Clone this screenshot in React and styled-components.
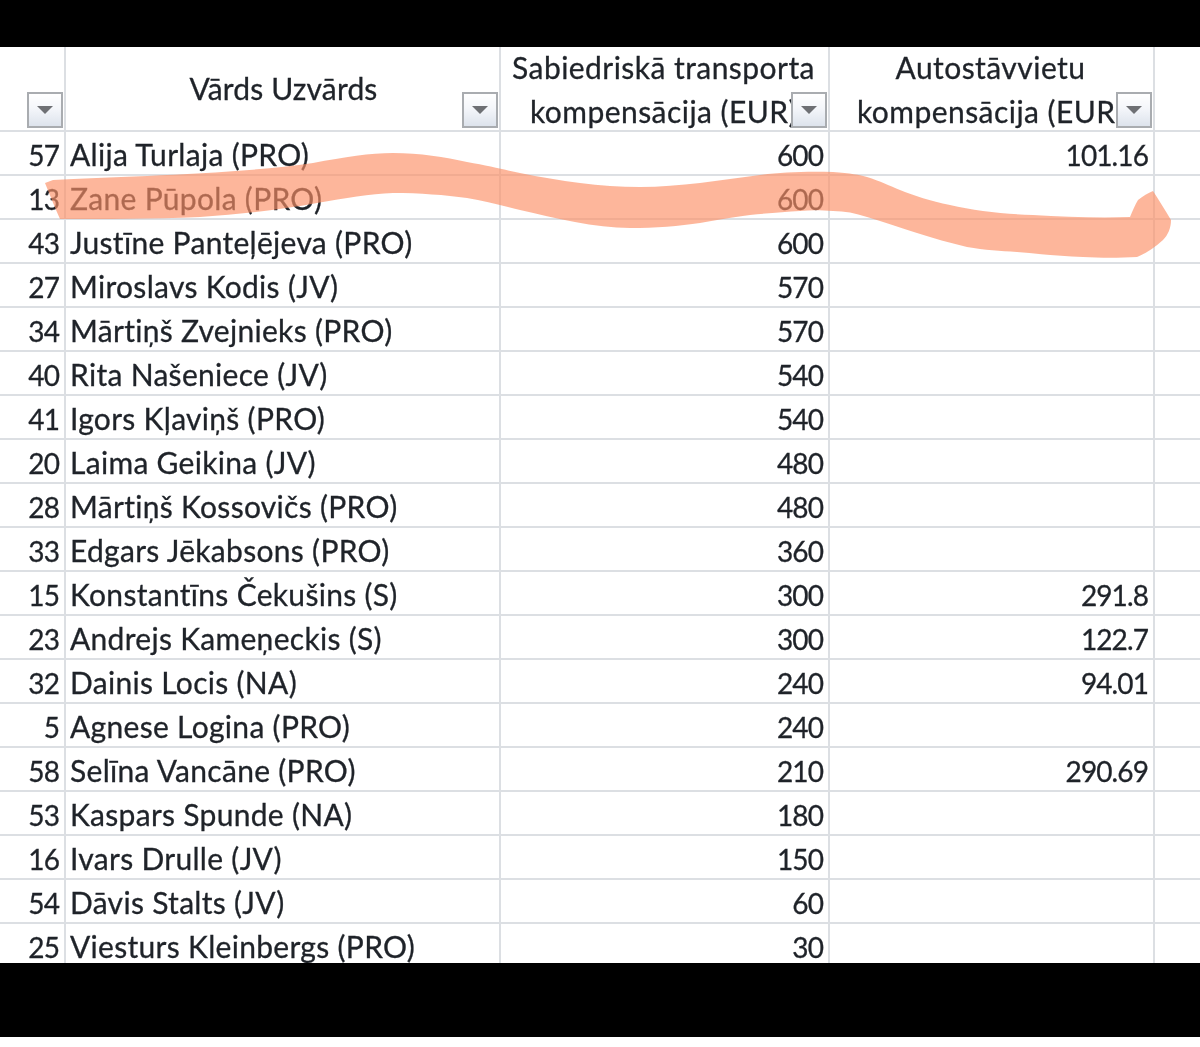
import React from "react";
import styled, { createGlobalStyle } from "styled-components";

const Global = createGlobalStyle`
  html, body { margin: 0; padding: 0; background: #fff; }
  body { font-family: "Lato", "Liberation Sans", sans-serif; }
`;

const Page = styled.div`
  position: relative;
  width: 1200px;
  height: 1047px;
  overflow: hidden;
  background: #fff;
`;
const BlackBar = styled.div`
  height: ${(p) => p.$h}px;
  background: #000;
`;
const Sheet = styled.div`
  height: 916px;
  overflow: hidden;
  background: #fff;
  color: #1f2329;
  font-size: 30px;
  line-height: 44px;
  -webkit-text-stroke: 0.3px #1f2329;
  filter: blur(0.55px);
`;
const Grid = styled.div`
  display: grid;
  grid-template-columns: 66px 435px 329px 325px 45px;
`;
const NameCell = styled.div`
  box-sizing: border-box;
  height: 44px;
  padding-left: 4px;
  border-right: 2px solid #dcdfe3;
  border-bottom: 2px solid #dcdfe3;
  white-space: nowrap;
  overflow: hidden;
  line-height: 45px;
  letter-spacing: 0.3px;
`;
const NumberCell = styled.div`
  box-sizing: border-box;
  height: 44px;
  padding-right: 5px;
  border-right: 2px solid #dcdfe3;
  border-bottom: 2px solid #dcdfe3;
  text-align: right;
  overflow: hidden;
  font-size: 28px;
  letter-spacing: -0.9px;
  line-height: 46px;
`;
const HeaderCell = styled.div`
  position: relative;
  box-sizing: border-box;
  height: 85px;
  border-right: 2px solid #dcdfe3;
  border-bottom: 2px solid #dcdfe3;
  display: flex;
  flex-direction: column;
  justify-content: center;
  align-items: center;
  white-space: nowrap;
  overflow: hidden;
  line-height: 44px;
  letter-spacing: ${(p) => p.$spacing || 0.45}px;
  padding-right: ${(p) => p.$pr || 0}px;
  padding-left: ${(p) => p.$pl || 0}px;
  padding-bottom: ${(p) => p.$pb || 0}px;
`;
const EndCell = styled.div`
  box-sizing: border-box;
  height: ${(p) => p.$h}px;
  border-bottom: 2px solid #dcdfe3;
`;
const FilterButton = styled.div`
  position: absolute;
  right: 1px;
  bottom: 2px;
  box-sizing: border-box;
  width: 36px;
  height: 36px;
  border: 2px solid #a9acb0;
  background: linear-gradient(180deg, #ffffff 0%, #f4f6fa 45%, #dde3ec 100%);
  display: flex;
  align-items: center;
  justify-content: center;
`;
const Arrow = styled.span`
  width: 0;
  height: 0;
  border-left: 8px solid transparent;
  border-right: 8px solid transparent;
  border-top: 8px solid #6e7074;
`;
const Highlight = styled.svg`
  position: absolute;
  inset: 0;
  width: 1200px;
  height: 1047px;
  pointer-events: none;
`;

const rows = [
  [57, "Alija Turlaja (PRO)", "600", "101.16"],
  [13, "Zane Pūpola (PRO)", "600", ""],
  [43, "Justīne Panteļējeva (PRO)", "600", ""],
  [27, "Miroslavs Kodis (JV)", "570", ""],
  [34, "Mārtiņš Zvejnieks (PRO)", "570", ""],
  [40, "Rita Našeniece (JV)", "540", ""],
  [41, "Igors Kļaviņš (PRO)", "540", ""],
  [20, "Laima Geikina (JV)", "480", ""],
  [28, "Mārtiņš Kossovičs (PRO)", "480", ""],
  [33, "Edgars Jēkabsons (PRO)", "360", ""],
  [15, "Konstantīns Čekušins (S)", "300", "291.8"],
  [23, "Andrejs Kameņeckis (S)", "300", "122.7"],
  [32, "Dainis Locis (NA)", "240", "94.01"],
  [5, "Agnese Logina (PRO)", "240", ""],
  [58, "Selīna Vancāne (PRO)", "210", "290.69"],
  [53, "Kaspars Spunde (NA)", "180", ""],
  [16, "Ivars Drulle (JV)", "150", ""],
  [54, "Dāvis Stalts (JV)", "60", ""],
  [25, "Viesturs Kleinbergs (PRO)", "30", ""],
];

const Filter = () => (
  <FilterButton>
    <Arrow />
  </FilterButton>
);

const stroke =
  "M45 183 L53 180 C120 176 230 175 313 163 C345 157 370 153 393 153 C420 153 445 157 467 162 C490 166 505 170 520 173 C560 181 600 187 640 187 C680 187 720 180 760 175 C780 172 810 171 833 172 C850 173 860 175 867 177 C880 181 890 186 900 190 C915 196 930 201 950 205 C975 211 1005 214 1033 215 C1065 217 1100 218 1130 217 C1133 210 1135 205 1138 200 C1143 196 1148 193 1153 191 C1159 200 1165 210 1171 220 C1171 228 1168 235 1163 240 C1155 247 1147 253 1137 257 C1120 258 1100 258 1083 257 C1060 256 1040 254 1017 252 C1000 251 985 250 967 247 C950 243 933 238 917 233 C900 228 885 222 867 217 C855 213 845 211 833 211 C820 210 810 210 800 211 C785 212 770 213 750 215 C730 218 715 220 700 223 C680 226 655 228 630 228 C595 228 555 218 520 210 C500 205 485 201 467 198 C445 195 420 193 393 193 C370 194 345 198 317 203 C280 210 240 214 200 217 C150 219 105 219 60 219 C55 208 50 195 45 183 Z";

export default function App() {
  return (
    <Page>
      <Global />
      <BlackBar $h={47} />
      <Sheet>
        <Grid>
          <HeaderCell>
            <Filter />
          </HeaderCell>
          <HeaderCell $pb={2} $spacing={0.15} $pl={2}>
            <span>Vārds Uzvārds</span>
            <Filter />
          </HeaderCell>
          <HeaderCell $pr={2}>
            <span>Sabiedriskā transporta</span>
            <span>kompensācija (EUR)</span>
            <Filter />
          </HeaderCell>
          <HeaderCell $pr={2}>
            <span>Autostāvvietu</span>
            <span>kompensācija (EUR)</span>
            <Filter />
          </HeaderCell>
          <EndCell $h={85} />
          {rows.map(([n, name, t, p]) => (
            <React.Fragment key={n}>
              <NumberCell>{n}</NumberCell>
              <NameCell>{name}</NameCell>
              <NumberCell>{t}</NumberCell>
              <NumberCell>{p}</NumberCell>
              <EndCell $h={44} />
            </React.Fragment>
          ))}
        </Grid>
      </Sheet>
      <BlackBar $h={74} />
      <Highlight viewBox="0 0 1200 1047">
        <path d={stroke} fill="#fc8f65" fillOpacity="0.65" />
      </Highlight>
    </Page>
  );
}
